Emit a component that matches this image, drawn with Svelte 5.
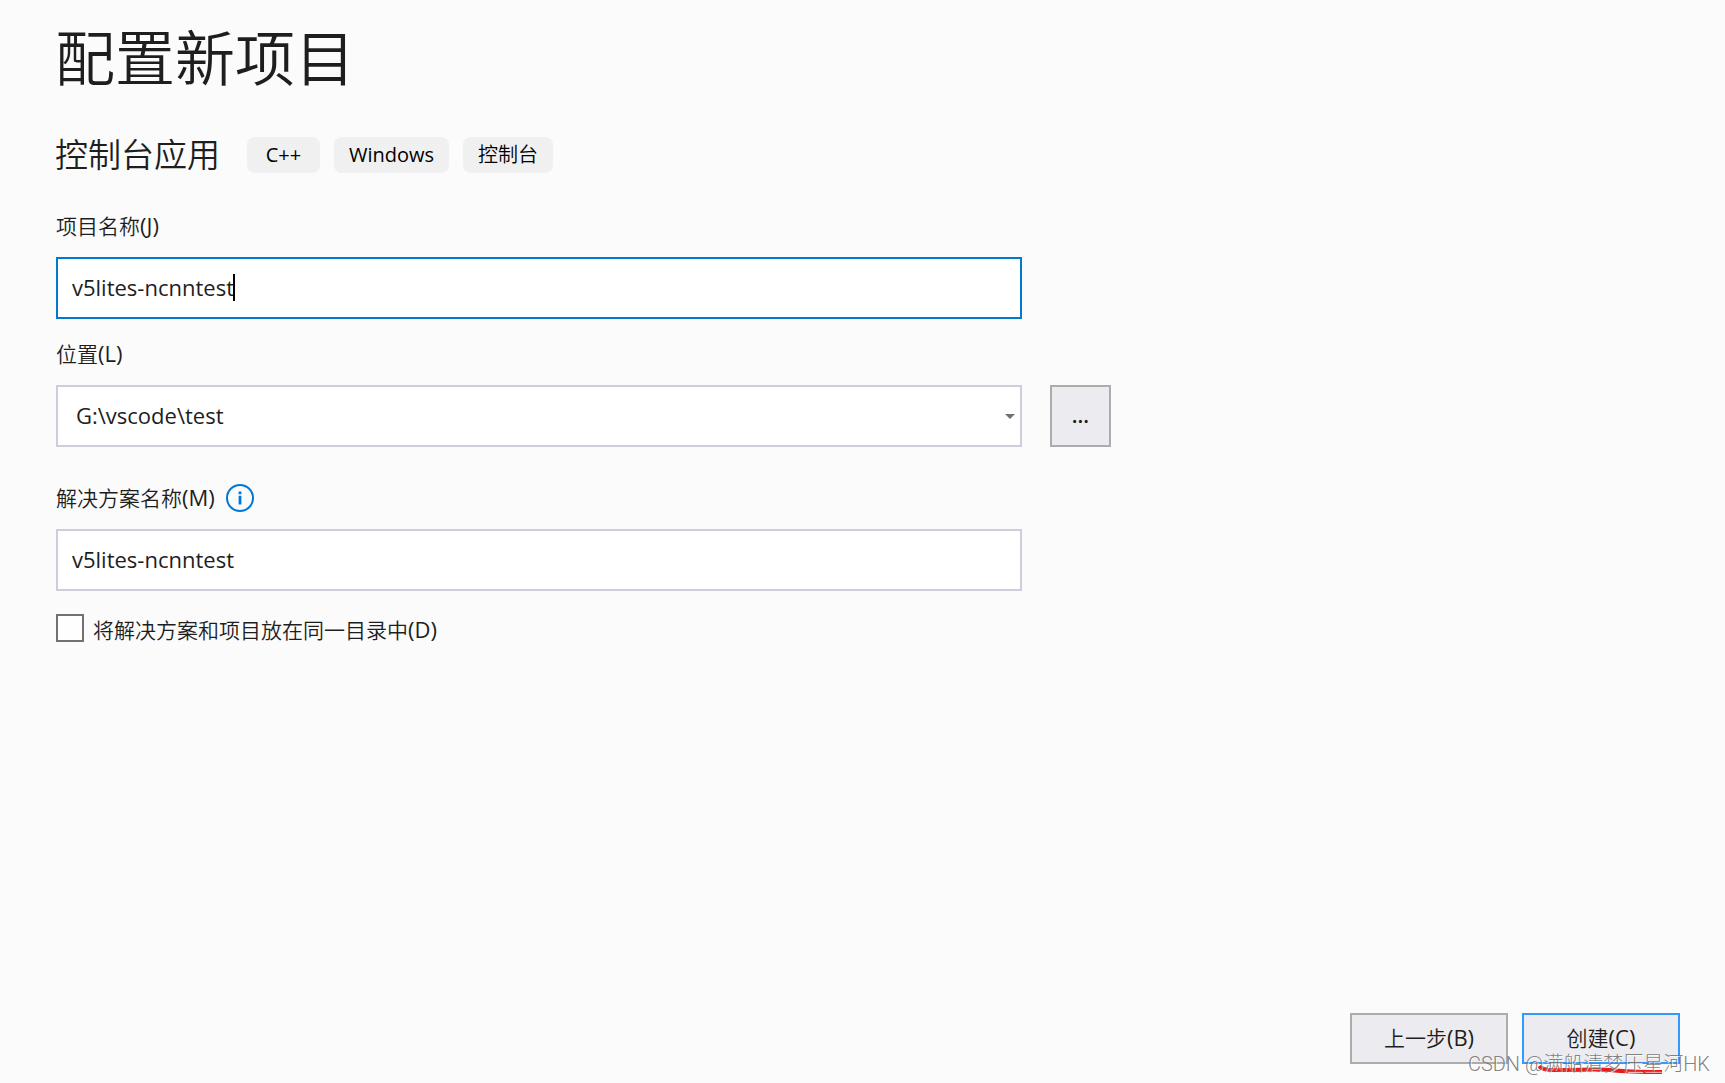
<script>
  let projectName = 'v5lites-ncnntest';
  let location = 'G:\\vscode\\test';
  let solutionName = 'v5lites-ncnntest';
  let sameFolder = false;

  const tags = ['C++', 'Windows', '控制台'];
  const locations = ['G:\\vscode\\test'];
</script>

<div class="page">
  <main>
    <h1>配置新项目</h1>

    <div class="template">
      <h2>控制台应用</h2>
      <ul class="tags">
        {#each tags as tag}
          <li class="tag" class:latin={/^[\x00-\x7f]+$/.test(tag)}>{tag}</li>
        {/each}
      </ul>
    </div>

    <form id="project">
      <label class="label" for="project-name">项目名称<span class="key">(J)</span></label>
      <div class="field">
        <input id="project-name" class="box active" type="text" spellcheck="false" bind:value={projectName} />
        <span class="caret"></span>
      </div>

      <label class="label second" for="location">位置<span class="key">(L)</span></label>
      <div class="row">
        <div class="field">
          <select id="location" class="box" bind:value={location}>
            {#each locations as path}
              <option value={path}>{path}</option>
            {/each}
          </select>
          <svg class="arrow" width="10" height="5" viewBox="0 0 10 5" aria-hidden="true">
            <path d="M0 0h10L5 5z" fill="#717171" />
          </svg>
        </div>
        <button class="browse" type="button">...</button>
      </div>

      <div class="label-row">
        <label class="label" for="solution-name">解决方案名称<span class="key">(M)</span></label>
        <svg width="28" height="28" viewBox="0 0 28 28" aria-hidden="true">
          <circle cx="14" cy="14" r="13" fill="none" stroke="#0078d7" stroke-width="2" />
          <path d="M12.6 7.6h2.8v2.6h-2.8zM12.6 11.8h2.8v8.6h-2.8z" fill="#0078d7" />
        </svg>
      </div>
      <div class="field">
        <input id="solution-name" class="box" type="text" spellcheck="false" bind:value={solutionName} />
      </div>

      <label class="check">
        <input type="checkbox" bind:checked={sameFolder} />
        <span>将解决方案和项目放在同一目录中<span class="key">(D)</span></span>
      </label>
    </form>
  </main>

  <footer>
    <button class="action" type="button">上一步<span class="key">(B)</span></button>
    <button class="action primary" type="submit" form="project">创建<span class="key">(C)</span></button>
  </footer>

  <svg class="underline" width="126" height="12" viewBox="0 0 126 12" aria-hidden="true">
    <path d="M1 2C3 5 8 6 16 6C46 6 58 5 72 6C90 8 106 8 124 8" fill="none" stroke="#e81c1c" stroke-width="4" />
  </svg>
  <span class="watermark">CSDN @满船清梦压星河HK</span>
</div>

<style>
  :global(body) {
    margin: 0;
    background: #fbfbfb;
  }

  .page {
    position: relative;
    box-sizing: border-box;
    min-height: 100vh;
    display: flex;
    flex-direction: column;
    justify-content: space-between;
    padding: 24px 45px 19px 55px;
    overflow: hidden;
    color: #1e1e1e;
    font-family: "Open Sans", "Noto Sans CJK SC", sans-serif;
    font-size: 21px;
    font-weight: 350;
    line-height: 32px;
  }

  h1,
  h2 {
    margin: 0;
    font-weight: 350;
  }

  h1 {
    font-size: 60px;
    line-height: 68px;
  }

  h2 {
    font-size: 33px;
    line-height: 40px;
  }

  .template {
    display: flex;
    align-items: center;
    gap: 27px;
    margin-top: 43px;
  }

  .tags {
    display: flex;
    gap: 14px;
    margin: 0;
    padding: 0;
    list-style: none;
  }

  .tag {
    box-sizing: border-box;
    min-width: 73px;
    padding: 0 15px;
    border-radius: 8px;
    background: #f0f0f0;
    color: #000;
    font-size: 20px;
    line-height: 36px;
    text-align: center;
  }

  .tag.latin,
  .key {
    font-weight: 400;
  }

  .key {
    font-size: 22px;
    line-height: 28px;
  }

  form {
    margin-top: 35px;
    padding-left: 1px;
  }

  .label {
    display: block;
  }

  .second {
    margin-top: 19px;
  }

  .field {
    position: relative;
    width: 56vw;
    margin-top: 15px;
  }

  .box {
    display: block;
    box-sizing: border-box;
    width: 100%;
    height: 62px;
    margin: 0;
    padding: 0 14px 2px;
    border: 2px solid #cccedb;
    border-radius: 0;
    outline: none;
    appearance: none;
    background: #fff;
    color: #1e1e1e;
    font: inherit;
    font-size: 22px;
    font-weight: 400;
  }

  .box.active {
    border-color: #007acc;
  }

  select.box {
    padding: 0 18px 2px;
  }

  .caret {
    position: absolute;
    top: 17px;
    left: 177px;
    width: 2px;
    height: 27px;
    background: #000;
  }

  .arrow {
    position: absolute;
    top: 29px;
    right: 7px;
  }

  .row {
    display: flex;
    align-items: flex-end;
    gap: 28px;
  }

  button {
    box-sizing: border-box;
    padding: 0 0 2px;
    border: 2px solid #acacac;
    background: #ececf0;
    color: #1e1e1e;
    font: inherit;
  }

  .browse {
    width: 61px;
    height: 62px;
    font-weight: 600;
  }

  .label-row {
    display: flex;
    align-items: center;
    gap: 11px;
    margin-top: 35px;
  }

  .check {
    display: inline-flex;
    align-items: flex-start;
    gap: 9px;
    margin-top: 23px;
  }

  .check input {
    box-sizing: border-box;
    width: 28px;
    height: 28px;
    margin: 0;
    border: 2px solid #717171;
    appearance: none;
    background: #fefefe;
  }

  .check input:checked {
    background: #007acc;
  }

  footer {
    display: flex;
    justify-content: flex-end;
    gap: 14px;
  }

  .action {
    width: 158px;
    height: 51px;
  }

  .action.primary {
    border-color: #3399ff;
  }

  .underline {
    position: absolute;
    right: 61px;
    bottom: 7px;
  }

  .watermark {
    position: absolute;
    right: 15px;
    bottom: 4px;
    color: rgba(115, 115, 115, 0.9);
    font-family: Roboto, "Noto Sans CJK SC", sans-serif;
    font-size: 20px;
    font-weight: 300;
    line-height: 30px;
    text-shadow: 1px 1px 0 rgba(255, 255, 255, 0.7);
    white-space: nowrap;
    pointer-events: none;
  }
</style>
